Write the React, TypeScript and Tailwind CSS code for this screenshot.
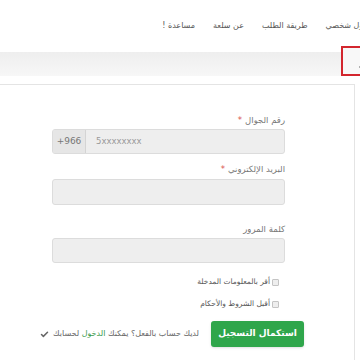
import { Check } from "lucide-react";

function Label({ text, required }: { text: string; required?: boolean }) {
  return (
    <div className="text-[8.5px] leading-[14px] text-[#777]">
      {text}
      {required && <span className="text-[#d9534f] mr-[3px]">*</span>}
    </div>
  );
}

function CheckRow({ text }: { text: string }) {
  return (
    <div className="flex items-center gap-[2px] pr-[6px] h-[14px]">
      <span className="w-[7px] h-[7px] border border-[#c4c4c4] bg-[#eee] rounded-[1px]" />
      <span className="text-[7.5px] text-[#555]">{text}</span>
    </div>
  );
}

export default function App() {
  return (
    <div
      dir="rtl"
      className="relative w-[360px] h-[360px] overflow-hidden bg-white font-['DejaVu_Sans',sans-serif]"
    >
      {/* top nav */}
      <nav className="h-[52px] flex items-center gap-[18px] mr-[-12px] text-[8px] text-[#555] whitespace-nowrap">
        <span>دخول شخصي</span>
        <span>طريقة الطلب</span>
        <span>عن سلعة</span>
        <span>
          مساعدة <span className="text-[#555]">!</span>
        </span>
      </nav>

      {/* grey bar */}
      <div className="h-[24px] bg-gradient-to-b from-[#eeeeee] to-[#f7f7f7]" />
      <div className="h-[8px]" />

      {/* card */}
      <div className="mr-[5px] ml-[-2px] h-[280px] border-t border-r border-[#e4e4e4]">
        <div className="mr-[69px] w-[233px] pt-[28px]">
          <Label text="رقم الجوال" required />
          <div dir="ltr" className="mt-[2px] h-[25px] flex rounded-[3px] border border-[#dcdcdc] bg-[#eeeeee] overflow-hidden">
            <div className="w-[33px] flex items-center justify-center bg-[#e6e6e6] border-r border-[#d4d4d4] text-[9px] text-[#777]">
              +966
            </div>
            <div className="flex items-center pl-[10px] text-[8.5px] text-[#999]">5xxxxxxxx</div>
          </div>

          <div className="mt-[8px]">
            <Label text="البريد الإلكتروني" required />
          </div>
          <div className="mt-[3px] h-[26px] rounded-[3px] border border-[#dcdcdc] bg-[#eeeeee]" />

          <div className="mt-[17px]">
            <Label text="كلمة المرور" />
          </div>
          <div className="mt-[2px] h-[25px] rounded-[3px] border border-[#dcdcdc] bg-[#eeeeee]" />

          <div className="mt-[12px] flex flex-col gap-[8px]">
            <CheckRow text="أقر بالمعلومات المدخلة" />
            <CheckRow text="أقبل الشروط والأحكام" />
          </div>
        </div>

        <div className="mt-[10px] mr-[50px] flex items-center gap-[12px]">
          <button className="w-[93px] h-[26px] rounded-[3px] bg-[#2fa64b] text-white text-[9px] font-bold whitespace-nowrap shadow-sm">
            استكمال التسجيل
          </button>
          <div className="flex items-center gap-[4px] text-[8px] text-[#666] whitespace-nowrap">
            <span>
              لديك حساب بالفعل؟ يمكنك <span className="text-[#3a9a4c]">الدخول</span> لحسابك
            </span>
            <Check className="w-[9px] h-[9px] text-[#666]" strokeWidth={4} />
          </div>
        </div>
      </div>

      {/* highlighted box */}
      <div className="absolute left-[341px] top-[46px] w-[30px] h-[30px] border-2 border-[#d3262e] bg-[#f8f8f8]">
        <span className="absolute left-[16px] top-[18px] w-[2px] h-[2px] rounded-full bg-[#999]" />
      </div>
    </div>
  );
}
